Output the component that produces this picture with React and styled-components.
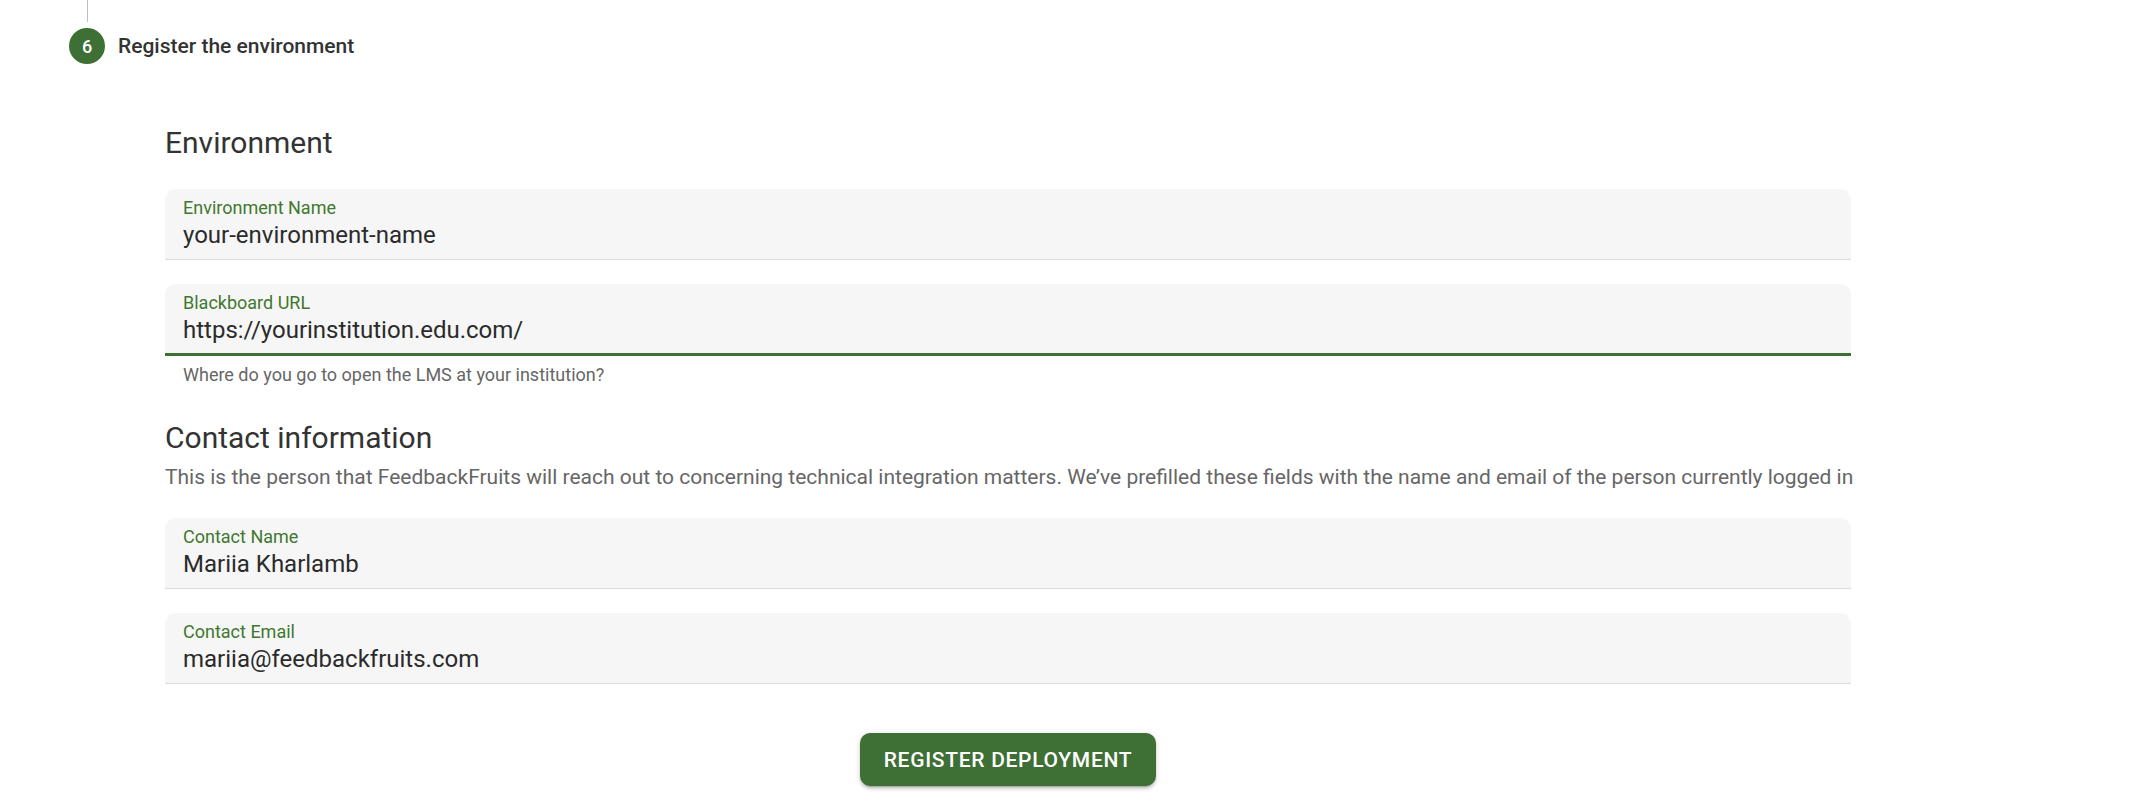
import React from "react";
import styled, { createGlobalStyle } from "styled-components";

const GREEN = "#3e7035";

const GlobalStyle = createGlobalStyle`
  body {
    margin: 0;
    background: #ffffff;
    font-family: Roboto, "Liberation Sans", Arial, sans-serif;
    color: #333333;
  }
`;

const fields = [
  { label: "Environment Name", value: "your-environment-name" },
  {
    label: "Blackboard URL",
    value: "https://yourinstitution.edu.com/",
    focused: true,
    helper: "Where do you go to open the LMS at your institution?",
  },
];

const contactFields = [
  { label: "Contact Name", value: "Mariia Kharlamb" },
  { label: "Contact Email", value: "mariia@feedbackfruits.com" },
];

function TextField({ label, value, focused, helper, top }) {
  return (
    <FieldGroup $top={top}>
      <Field $focused={focused}>
        <FieldLabel>{label}</FieldLabel>
        <FieldInput defaultValue={value} />
      </Field>
      {helper && <HelperText>{helper}</HelperText>}
    </FieldGroup>
  );
}

function App() {
  return (
    <>
      <GlobalStyle />
      <Step>
        <Connector />
        <StepHeader>
          <StepBadge>6</StepBadge>
          <StepTitle>Register the environment</StepTitle>
        </StepHeader>
        <Form>
          <SectionTitle $top={61}>Environment</SectionTitle>
          {fields.map((f, i) => (
            <TextField key={f.label} {...f} top={i === 0 ? 28 : 24} />
          ))}
          <SectionTitle $top={32}>Contact information</SectionTitle>
          <Description>
            This is the person that FeedbackFruits will reach out to concerning
            technical integration matters. We’ve prefilled these fields with
            the name and email of the person currently logged in
          </Description>
          {contactFields.map((f, i) => (
            <TextField key={f.label} {...f} top={i === 0 ? 26 : 24} />
          ))}
          <Actions>
            <SubmitButton type="button">Register deployment</SubmitButton>
          </Actions>
        </Form>
      </Step>
    </>
  );
}

//Styled Components
const Step = styled.div`
  display: flex;
  flex-direction: column;
  padding-bottom: 16px;
`;

const Connector = styled.div`
  width: 1px;
  height: 22px;
  margin-left: 87px;
  background: #bdbdbd;
`;

const StepHeader = styled.div`
  display: flex;
  align-items: center;
  gap: 13px;
  margin-top: 6px;
  padding-left: 69px;
`;

const StepBadge = styled.div`
  width: 36px;
  height: 36px;
  border-radius: 50%;
  background: ${GREEN};
  color: #ffffff;
  display: flex;
  align-items: center;
  justify-content: center;
  font-size: 18px;
  font-weight: 500;
`;

const StepTitle = styled.div`
  font-size: 21px;
  font-weight: 500;
  color: #333333;
`;

const Form = styled.form`
  display: flex;
  flex-direction: column;
  width: 1686px;
  margin-left: 165px;
`;

const SectionTitle = styled.h2`
  margin: ${(p) => p.$top}px 0 0;
  font-size: 30px;
  line-height: 36px;
  font-weight: 400;
  color: #333333;
`;

const Description = styled.p`
  margin: 6px 0 0;
  font-size: 21px;
  line-height: 30px;
  color: #666666;
  white-space: nowrap;
`;

const FieldGroup = styled.div`
  display: flex;
  flex-direction: column;
  margin-top: ${(p) => p.$top}px;
`;

const Field = styled.label`
  display: flex;
  flex-direction: column;
  padding: 8px 18px ${(p) => (p.$focused ? "8px" : "9px")};
  background: #f6f6f6;
  border-radius: 11px 11px 0 0;
  border-bottom: ${(p) => (p.$focused ? `3px solid ${GREEN}` : "1px solid #dadada")};
`;

const FieldLabel = styled.span`
  font-size: 18px;
  line-height: 22px;
  color: #41782f;
`;

const FieldInput = styled.input`
  margin-top: 1px;
  padding: 0;
  border: none;
  outline: none;
  background: transparent;
  font-family: inherit;
  font-size: 24px;
  line-height: 30px;
  height: 30px;
  color: #2b2b2b;
`;

const HelperText = styled.div`
  margin-top: 5px;
  padding-left: 18px;
  font-size: 18px;
  line-height: 27px;
  color: #666666;
`;

const Actions = styled.div`
  display: flex;
  justify-content: center;
  margin-top: 49px;
`;

const SubmitButton = styled.button`
  height: 53px;
  padding: 0 24px;
  border: none;
  border-radius: 10px;
  background: ${GREEN};
  color: #ffffff;
  font-family: inherit;
  font-size: 21px;
  font-weight: 500;
  letter-spacing: 0.7px;
  text-transform: uppercase;
  box-shadow: 0 4px 1px -3px rgba(0, 0, 0, 0.2), 0 3px 3px 0 rgba(0, 0, 0, 0.14),
    0 1px 7px 0 rgba(0, 0, 0, 0.12);
  cursor: pointer;
`;

export default App;
